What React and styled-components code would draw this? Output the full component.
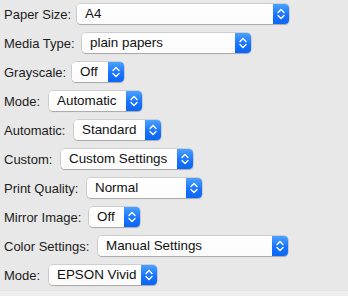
import React from "react";
import styled, { createGlobalStyle } from "styled-components";

const Global = createGlobalStyle`
  html, body { margin: 0; padding: 0; background: #e8e8e8; }
  body { font-family: "Liberation Sans", Arial, sans-serif; }
`;

const Panel = styled.div`
  width: 348px;
  height: 296px;
  background: #e8e8e8;
  display: flex;
  flex-direction: column;
  box-sizing: border-box;
`;

const Rows = styled.div`
  display: flex;
  flex-direction: column;
  gap: 9px;
  padding: 4px 0 0 4px;
  flex: 1;
`;

const Footer = styled.div`
  height: 5px;
  background: #eeeeee;
  border-top: 1px solid #e2e2e2;
`;

const Row = styled.div`
  display: flex;
  align-items: center;
  height: 20px;
`;

const Label = styled.span`
  font-size: 13px;
  color: #1c1c1c;
  width: ${(p) => p.$w}px;
  flex: none;
  white-space: nowrap;
`;

const Popup = styled.div`
  width: ${(p) => p.$w}px;
  height: 20px;
  box-sizing: border-box;
  display: flex;
  border-radius: 4px;
  background: linear-gradient(#ffffff, #fbfbfb);
  box-shadow: 0 0 0 0.5px rgba(0, 0, 0, 0.22), 0 1px 1px rgba(0, 0, 0, 0.18);
  overflow: hidden;
`;

const Value = styled.span`
  flex: 1;
  font-size: 13.4px;
  color: #111;
  padding-left: 8px;
  line-height: 20px;
  white-space: nowrap;
`;

const Stepper = styled.div`
  width: 16px;
  flex: none;
  background: linear-gradient(#4aa2ff, #1a73ff 55%, #0b66f5);
  display: flex;
  align-items: center;
  justify-content: center;
`;

const Chevrons = () => (
  <svg width="8" height="12" viewBox="0 0 8 12">
    <path d="M1 4.5 L4 1.5 L7 4.5" fill="none" stroke="#fff" strokeWidth="1.4" strokeLinecap="round" strokeLinejoin="round" />
    <path d="M1 7.5 L4 10.5 L7 7.5" fill="none" stroke="#fff" strokeWidth="1.4" strokeLinecap="round" strokeLinejoin="round" />
  </svg>
);

const items = [
  { label: "Paper Size:", value: "A4", x: 77, end: 289 },
  { label: "Media Type:", value: "plain papers", x: 82, end: 251 },
  { label: "Grayscale:", value: "Off", x: 72, end: 124 },
  { label: "Mode:", value: "Automatic", x: 49, end: 142 },
  { label: "Automatic:", value: "Standard", x: 74, end: 161 },
  { label: "Custom:", value: "Custom Settings", x: 61, end: 193 },
  { label: "Print Quality:", value: "Normal", x: 87, end: 202 },
  { label: "Mirror Image:", value: "Off", x: 89, end: 140 },
  { label: "Color Settings:", value: "Manual Settings", x: 98, end: 288 },
  { label: "Mode:", value: "EPSON Vivid", x: 49, end: 157 },
];

export default function App() {
  return (
    <>
      <Global />
      <Panel>
        <Rows>
          {items.map((it, i) => (
            <Row key={i}>
              <Label $w={it.x - 4}>{it.label}</Label>
              <Popup $w={it.end - it.x}>
                <Value>{it.value}</Value>
                <Stepper>
                  <Chevrons />
                </Stepper>
              </Popup>
            </Row>
          ))}
        </Rows>
        <Footer />
      </Panel>
    </>
  );
}
